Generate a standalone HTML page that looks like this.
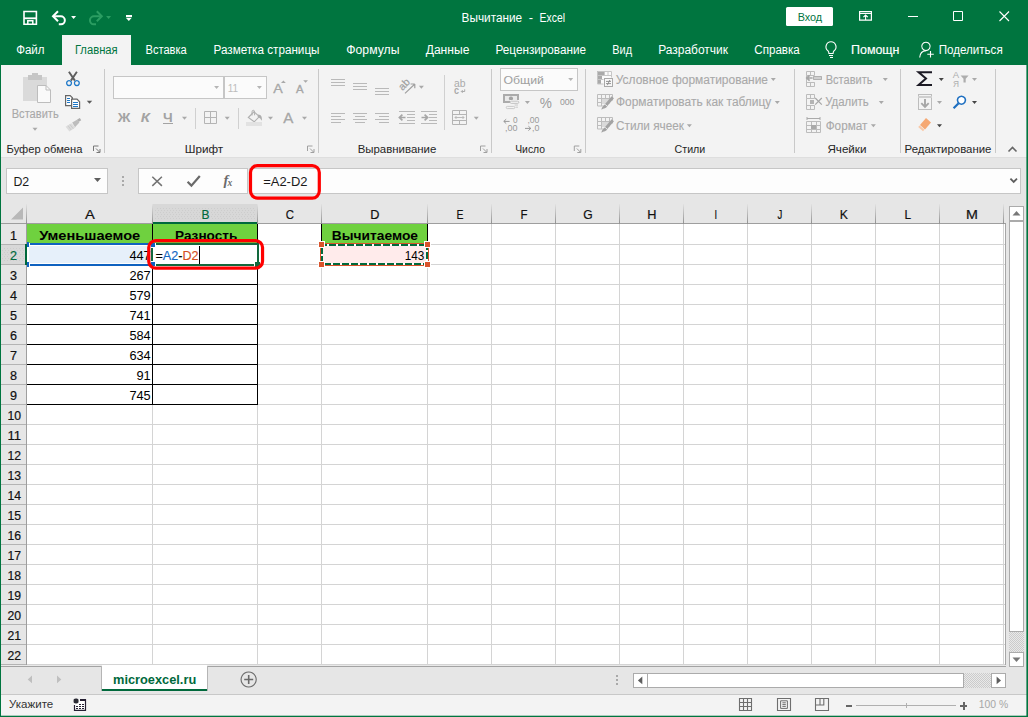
<!DOCTYPE html>
<html lang="ru"><head><meta charset="utf-8"><title>Вычитание - Excel</title>
<style>
html,body{margin:0;padding:0;background:#e6e6e6;overflow:hidden}
svg{display:block;font-family:"Liberation Sans",sans-serif}
svg rect{shape-rendering:crispEdges}
svg .aa{shape-rendering:geometricPrecision}
svg text{white-space:pre}
</style></head><body>
<svg width="1028" height="717" viewBox="0 0 1028 717">
<defs><pattern id="dh" width="3" height="4" patternUnits="userSpaceOnUse"><rect width="3" height="4" fill="#d8d8d8"/><rect x="1" y="0" width="1" height="1" fill="#cdcdcd"/><rect x="2" y="2" width="1" height="1" fill="#cdcdcd"/></pattern><pattern id="dz" width="2" height="2" patternUnits="userSpaceOnUse"><rect width="2" height="2" fill="#e9e9e9"/><rect width="1" height="1" fill="#cbcbcb"/><rect x="1" y="1" width="1" height="1" fill="#cbcbcb"/></pattern><linearGradient id="hg" x1="0" y1="0" x2="0" y2="1"><stop offset="0" stop-color="#e2e2e2"/><stop offset="1" stop-color="#8f8f8f"/></linearGradient></defs>
<rect x="0" y="0" width="1028" height="717" fill="#e6e6e6" />
<rect x="0" y="0" width="1028" height="65" fill="#00753f" />
<rect x="62" y="35" width="69" height="30" fill="#f3f3f3" />
<rect x="0" y="65" width="1028" height="92" fill="#f3f3f3" />
<rect x="0" y="157" width="1028" height="1" fill="#dedede"/>
<text x="461.5" y="21.8" font-size="12.5" fill="#fff" font-weight="normal" font-style="normal" textLength="60.7" lengthAdjust="spacingAndGlyphs" >Вычитание</text>
<text x="528.7" y="21.8" font-size="12.5" fill="#fff" font-weight="normal" font-style="normal" textLength="4.3" lengthAdjust="spacingAndGlyphs" >-</text>
<text x="539.6" y="21.8" font-size="12.5" fill="#fff" font-weight="normal" font-style="normal" textLength="25.4" lengthAdjust="spacingAndGlyphs" >Excel</text>
<path d="M24 11.5h12.4v12.7h-12.4z" fill="none" stroke="#fff" stroke-width="1.6" class="aa" />
<path d="M24 18.3h12.4" fill="none" stroke="#fff" stroke-width="1.8" class="aa" />
<path d="M27.8 24v-3.2h5v3.2" fill="none" stroke="#fff" stroke-width="1.5" class="aa" />
<path d="M53.5 16.3h7.2a4 4 0 0 1 0.3 8h-2.2" fill="none" stroke="#fff" stroke-width="2" class="aa" />
<path d="M58 11.3l-5 5l5 5" fill="none" stroke="#fff" stroke-width="2" class="aa" />
<path d="M71.1 16.1h5l-2.5 3z" fill="#fff" class="aa"/>
<path d="M101.3 16.3h-7.2a4 4 0 0 0 -0.3 8h2.2" fill="none" stroke="#2b9d62" stroke-width="2" class="aa" />
<path d="M96.8 11.3l5 5l-5 5" fill="none" stroke="#2b9d62" stroke-width="2" class="aa" />
<path d="M106.1 16.1h5l-2.5 3z" fill="#2b9d62" class="aa"/>
<rect x="126" y="15" width="6" height="1.5" fill="#fff"/>
<path d="M125.80000000000001 17.7h6l-3.0 3.2z" fill="#fff" class="aa"/>
<rect x="786" y="7" width="47" height="19" rx="1.5" fill="#fff" class="aa"/>
<text x="797.7" y="20.6" font-size="11.5" fill="#00753f" font-weight="normal" font-style="normal" textLength="24.5" lengthAdjust="spacingAndGlyphs" >Вход</text>
<path d="M859.6 11.6h11.8v8.6h-11.8z" fill="none" stroke="#fff" stroke-width="1.2" class="aa" />
<rect x="859" y="13" width="13" height="1" fill="#fff"/>
<path d="M865.6 20v-4.6M863.4 17.2l2.2-2.2l2.2 2.2" fill="none" stroke="#fff" stroke-width="1.1" class="aa" />
<rect x="908" y="16" width="10" height="1" fill="#fff"/>
<path d="M953.5 11.5h9v9h-9z" fill="none" stroke="#fff" stroke-width="1" class="aa" />
<path d="M999.5 11.5l9.5 9.5M1009 11.5l-9.5 9.5" fill="none" stroke="#fff" stroke-width="1.1" class="aa" />
<text x="16.2" y="53.8" font-size="12" fill="#fff" font-weight="normal" font-style="normal" textLength="28.3" lengthAdjust="spacingAndGlyphs" >Файл</text>
<text x="74.9" y="53.8" font-size="12" fill="#00753f" font-weight="normal" font-style="normal" textLength="42.8" lengthAdjust="spacingAndGlyphs" >Главная</text>
<text x="145.5" y="53.8" font-size="12" fill="#fff" font-weight="normal" font-style="normal" textLength="41.3" lengthAdjust="spacingAndGlyphs" >Вставка</text>
<text x="213.5" y="53.8" font-size="12" fill="#fff" font-weight="normal" font-style="normal" textLength="106.0" lengthAdjust="spacingAndGlyphs" >Разметка страницы</text>
<text x="346.3" y="53.8" font-size="12" fill="#fff" font-weight="normal" font-style="normal" textLength="53.1" lengthAdjust="spacingAndGlyphs" >Формулы</text>
<text x="425.7" y="53.8" font-size="12" fill="#fff" font-weight="normal" font-style="normal" textLength="43.7" lengthAdjust="spacingAndGlyphs" >Данные</text>
<text x="495.5" y="53.8" font-size="12" fill="#fff" font-weight="normal" font-style="normal" textLength="90.5" lengthAdjust="spacingAndGlyphs" >Рецензирование</text>
<text x="612.3" y="53.8" font-size="12" fill="#fff" font-weight="normal" font-style="normal" textLength="19.7" lengthAdjust="spacingAndGlyphs" >Вид</text>
<text x="658.2" y="53.8" font-size="12" fill="#fff" font-weight="normal" font-style="normal" textLength="69.8" lengthAdjust="spacingAndGlyphs" >Разработчик</text>
<text x="754.3" y="53.8" font-size="12" fill="#fff" font-weight="normal" font-style="normal" textLength="45.5" lengthAdjust="spacingAndGlyphs" >Справка</text>
<text x="851" y="53.8" font-size="12" fill="#fff" font-weight="normal" font-style="normal" textLength="48.5" lengthAdjust="spacingAndGlyphs" stroke="#fff" stroke-width="0.15">Помощн</text>
<text x="938.7" y="53.8" font-size="12" fill="#fff" font-weight="normal" font-style="normal" textLength="64.0" lengthAdjust="spacingAndGlyphs" >Поделиться</text>
<path d="M831 41.8a5 5 0 0 1 3 9c-0.8 0.7-0.9 1.6-0.9 2.7h-4.2c0-1.1-0.1-2-0.9-2.7a5 5 0 0 1 3-9z" fill="none" stroke="#fff" stroke-width="1.1" class="aa" />
<rect x="829" y="55" width="4.2000000000000455" height="1" fill="#fff"/>
<rect x="829.6" y="57" width="3.0" height="1" fill="#fff"/>
<path d="M926 42.2a4.2 4.2 0 1 1 -0.1 0z" fill="none" stroke="#fff" stroke-width="1.1" class="aa" />
<path d="M919.7 57.5c0.3-4 2.5-6.6 6.3-6.9" fill="none" stroke="#fff" stroke-width="1.1" class="aa" />
<path d="M930.5 51v6.5M927.3 54.2h6.5" fill="none" stroke="#fff" stroke-width="1.1" class="aa" />
<rect x="104" y="69" width="1" height="84" fill="#c9c9c9"/>
<rect x="318" y="69" width="1" height="84" fill="#c9c9c9"/>
<rect x="491" y="69" width="1" height="84" fill="#c9c9c9"/>
<rect x="585" y="69" width="1" height="84" fill="#c9c9c9"/>
<rect x="794" y="69" width="1" height="84" fill="#c9c9c9"/>
<rect x="900" y="69" width="1" height="84" fill="#c9c9c9"/>
<rect x="995" y="69" width="1" height="84" fill="#c9c9c9"/>
<rect x="195" y="108" width="1" height="21" fill="#d0d0d0"/>
<rect x="238" y="108" width="1" height="21" fill="#d0d0d0"/>
<rect x="444" y="75" width="1" height="55" fill="#d0d0d0"/>
<text x="6.6" y="152.8" font-size="11.5" fill="#262626" font-weight="normal" font-style="normal" textLength="75.8" lengthAdjust="spacingAndGlyphs" >Буфер обмена</text>
<path d="M93.5 151v-5h5" fill="none" stroke="#777" stroke-width="1" class="aa" />
<path d="M96.0 148.5l3.5 3.5M100.0 149v3.5h-3.5" fill="none" stroke="#777" stroke-width="1" class="aa" />
<text x="11.7" y="117.8" font-size="12" fill="#a9a9a9" font-weight="normal" font-style="normal" textLength="47.0" lengthAdjust="spacingAndGlyphs" stroke="#a9a9a9" stroke-width="0.1">Вставить</text>
<path d="M32.5 127.80000000000001h5l-2.5 3z" fill="#a9a9a9" class="aa"/>
<rect x="23" y="77" width="24" height="24" fill="#dadada" />
<rect x="28" y="75" width="14" height="5" fill="#c6c6c6" />
<rect x="32" y="73" width="6" height="3" fill="#c6c6c6" />
<path d="M37.5 85.5h8.5l4.5 4.5v12.5h-13z" fill="#fafafa" stroke="#bdbdbd" stroke-width="1" class="aa" />
<path d="M46 85.5v4.5h4.5" fill="none" stroke="#bdbdbd" stroke-width="1" class="aa" />
<path d="M68.9 71.8l6 8.8M76.9 71.8l-6 8.8" fill="none" stroke="#5e5e5e" stroke-width="1.9" class="aa" />
<path d="M69.1 80.7a2.4 2.4 0 1 1 -0.1 0zM76.9 80.7a2.4 2.4 0 1 1 -0.1 0z" fill="#f3f3f3" stroke="#1e78c8" stroke-width="1.3" class="aa" />
<path d="M65.6 95.6h4.6l2.2 2.2v7.8h-6.8z" fill="#fff" stroke="#666" stroke-width="1.2" class="aa" />
<path d="M71.6 99.2h5.4l2.6 2.6v6.6h-8z" fill="#fff" stroke="#666" stroke-width="1.2" class="aa" />
<rect x="67" y="98" width="3" height="1" fill="#1e78c8"/>
<rect x="67" y="100" width="3" height="1" fill="#1e78c8"/>
<rect x="67" y="102" width="3" height="1" fill="#1e78c8"/>
<rect x="73" y="102" width="5" height="1" fill="#1e78c8"/>
<rect x="73" y="104" width="5" height="1" fill="#1e78c8"/>
<rect x="73" y="106" width="5" height="1" fill="#1e78c8"/>
<path d="M86.8 100.8h5.4l-2.7 3z" fill="#5a5a5a" class="aa"/>
<path d="M77.2 119.6l2.6-1.6l1.4 2.2l-2.6 1.7z" fill="#b0b0b0" stroke="none" stroke-width="1" class="aa" />
<path d="M72.2 122.6l5.2-3.2l2 3.2l-4.4 4.6z" fill="#bdbdbd" stroke="none" stroke-width="1" class="aa" />
<path d="M71.4 123.2l4 4.4l-6 3.8l-3.8-4.6z" fill="#dcdcdc" stroke="none" stroke-width="1" class="aa" />
<path d="M69.8 124.4l3.6 4.4M68 125.6l3.2 4.4" fill="none" stroke="#c6c6c6" stroke-width="0.8" class="aa" />
<text x="184.8" y="152.8" font-size="11.5" fill="#262626" font-weight="normal" font-style="normal" textLength="38.4" lengthAdjust="spacingAndGlyphs" >Шрифт</text>
<path d="M307.5 151v-5h5" fill="none" stroke="#a0a0a0" stroke-width="1" class="aa" />
<path d="M310.0 148.5l3.5 3.5M314.0 149v3.5h-3.5" fill="none" stroke="#a0a0a0" stroke-width="1" class="aa" />
<rect x="113.5" y="76.5" width="110" height="22" fill="#fbfbfb" stroke="#c6c6c6" stroke-width="1" />
<rect x="224.5" y="76.5" width="42" height="22" fill="#fbfbfb" stroke="#c6c6c6" stroke-width="1" />
<path d="M214.1 86.0h5l-2.5 3z" fill="#b5b5b5" class="aa"/>
<path d="M256.9 86.0h5l-2.5 3z" fill="#b5b5b5" class="aa"/>
<text x="227.8" y="91.6" font-size="11.5" fill="#bdbdbd" font-weight="normal" font-style="normal" textLength="10.4" lengthAdjust="spacingAndGlyphs" >11</text>
<text x="273.3" y="92.8" font-size="13" fill="#a6a6a6" font-weight="normal" font-style="normal" textLength="9.5" lengthAdjust="spacingAndGlyphs" stroke="#a6a6a6" stroke-width="0.3">A</text>
<path d="M281 83l2.4-2.6l2.4 2.6z" fill="#a9a9a9" stroke="none" stroke-width="1" class="aa" />
<text x="296.1" y="92.8" font-size="10.5" fill="#a6a6a6" font-weight="normal" font-style="normal" textLength="7.6" lengthAdjust="spacingAndGlyphs" stroke="#a6a6a6" stroke-width="0.3">A</text>
<path d="M303.2 80.2h4.8l-2.4 2.6z" fill="#a9a9a9" stroke="none" stroke-width="1" class="aa" />
<text x="117.7" y="121.8" font-size="12.5" fill="#a3a3a3" font-weight="bold" font-style="normal" textLength="12.7" lengthAdjust="spacingAndGlyphs" >Ж</text>
<text x="140.8" y="121.8" font-size="12.5" fill="#a3a3a3" font-weight="bold" font-style="italic" textLength="9.2" lengthAdjust="spacingAndGlyphs" >К</text>
<text x="163.1" y="121.8" font-size="12.5" fill="#a3a3a3" font-weight="bold" font-style="normal" textLength="9.7" lengthAdjust="spacingAndGlyphs" >Ч</text>
<rect x="163" y="123" width="10" height="1" fill="#a3a3a3"/>
<path d="M182.0 116.8h5l-2.5 3z" fill="#a9a9a9" class="aa"/>
<path d="M204.5 111.5h12v12h-12zM210.5 111.5v12M204.5 117.5h12" fill="none" stroke="#b4b4b4" stroke-width="1" class="aa" />
<path d="M224.7 116.8h5l-2.5 3z" fill="#a9a9a9" class="aa"/>
<path d="M254 111.8l5.4 4.8l-5.2 5.2l-5.9-4.3z" fill="none" stroke="#b0b0b0" stroke-width="1.1" class="aa" />
<path d="M252 115.5v-3.6a1.3 1.6 0 0 1 2.6 0v3.4" fill="none" stroke="#b0b0b0" stroke-width="1" class="aa" />
<path d="M258.2 114.5c3 0.2 4.2 2.6 3.6 6.3c-0.9-1.9-1.9-2.9-4.2-3.9z" fill="#adadad" stroke="none" stroke-width="1" class="aa" />
<rect x="246" y="122" width="16" height="4" fill="#e2e2e2" />
<path d="M268.0 116.8h5l-2.5 3z" fill="#a9a9a9" class="aa"/>
<text x="283.2" y="122.8" font-size="15" fill="#a6a6a6" font-weight="normal" font-style="normal" textLength="10.1" lengthAdjust="spacingAndGlyphs" stroke="#a6a6a6" stroke-width="0.3">A</text>
<path d="M302.0 116.8h5l-2.5 3z" fill="#a9a9a9" class="aa"/>
<text x="357.7" y="152.8" font-size="11.5" fill="#262626" font-weight="normal" font-style="normal" textLength="78.6" lengthAdjust="spacingAndGlyphs" >Выравнивание</text>
<path d="M480.5 151v-5h5" fill="none" stroke="#a0a0a0" stroke-width="1" class="aa" />
<path d="M483.0 148.5l3.5 3.5M487.0 149v3.5h-3.5" fill="none" stroke="#a0a0a0" stroke-width="1" class="aa" />
<rect x="331" y="79" width="14" height="1" fill="#b9b9b9"/>
<rect x="331" y="82" width="14" height="1" fill="#b9b9b9"/>
<rect x="331" y="85" width="14" height="1" fill="#b9b9b9"/>
<rect x="353" y="83" width="14" height="1" fill="#b9b9b9"/>
<rect x="353" y="86" width="14" height="1" fill="#b9b9b9"/>
<rect x="353" y="89" width="14" height="1" fill="#b9b9b9"/>
<rect x="375" y="88" width="14" height="1" fill="#b9b9b9"/>
<rect x="375" y="91" width="14" height="1" fill="#b9b9b9"/>
<rect x="375" y="94" width="14" height="1" fill="#b9b9b9"/>
<text x="402.4" y="90.9" font-size="10.5" fill="#a0a0a0" stroke="#a0a0a0" stroke-width="0.2" transform="rotate(-45 402.4 90.9)">ab</text>
<path d="M405 93.4l9.6-9.2M414.8 84h-4.2M414.8 84v4.2" fill="none" stroke="#a0a0a0" stroke-width="1.2" class="aa" />
<path d="M418.9 85.8h5l-2.5 3z" fill="#a9a9a9" class="aa"/>
<rect x="331" y="113" width="14" height="1" fill="#b9b9b9"/>
<rect x="353" y="113" width="14" height="1" fill="#b9b9b9"/>
<rect x="375" y="113" width="14" height="1" fill="#b9b9b9"/>
<rect x="331" y="116" width="10" height="1" fill="#b9b9b9"/>
<rect x="355" y="116" width="10" height="1" fill="#b9b9b9"/>
<rect x="379" y="116" width="10" height="1" fill="#b9b9b9"/>
<rect x="331" y="119" width="14" height="1" fill="#b9b9b9"/>
<rect x="353" y="119" width="14" height="1" fill="#b9b9b9"/>
<rect x="375" y="119" width="14" height="1" fill="#b9b9b9"/>
<rect x="331" y="122" width="10" height="1" fill="#b9b9b9"/>
<rect x="355" y="122" width="10" height="1" fill="#b9b9b9"/>
<rect x="379" y="122" width="10" height="1" fill="#b9b9b9"/>
<rect x="399" y="111" width="16" height="1" fill="#b9b9b9"/>
<rect x="399" y="123" width="16" height="1" fill="#b9b9b9"/>
<rect x="407" y="114" width="8" height="1" fill="#b9b9b9"/>
<rect x="407" y="117" width="8" height="1" fill="#b9b9b9"/>
<rect x="407" y="120" width="8" height="1" fill="#b9b9b9"/>
<path d="M405.5 117.5h-5.5M402.4 114.6l-3 2.9l3 2.9" fill="none" stroke="#a6a6a6" stroke-width="1.7" class="aa" />
<rect x="421" y="111" width="16" height="1" fill="#b9b9b9"/>
<rect x="421" y="123" width="16" height="1" fill="#b9b9b9"/>
<rect x="429" y="114" width="8" height="1" fill="#b9b9b9"/>
<rect x="429" y="117" width="8" height="1" fill="#b9b9b9"/>
<rect x="429" y="120" width="8" height="1" fill="#b9b9b9"/>
<path d="M421.5 117.5h5.5M424.6 114.6l3 2.9l-3 2.9" fill="none" stroke="#a6a6a6" stroke-width="1.7" class="aa" />
<text x="454" y="86.5" font-size="10" fill="#aaa" font-weight="normal" font-style="normal" textLength="11.5" lengthAdjust="spacingAndGlyphs" >ab</text>
<text x="454" y="93.8" font-size="10" fill="#aaa" font-weight="bold" font-style="normal" textLength="5" lengthAdjust="spacingAndGlyphs" >c</text>
<path d="M464.7 89.3v2.2h-3.2M462.7 90.1l-1.4 1.4l1.4 1.4" fill="none" stroke="#a3a3a3" stroke-width="0.9" class="aa" />
<path d="M452.5 110.5h14v14h-14z M452.5 114.5h14 M452.5 120.5h14 M459.5 110.5v4 M459.5 120.5v4" fill="none" stroke="#b4b4b4" stroke-width="1" class="aa" />
<path d="M455 117.5h9M456.5 116l-1.5 1.5l1.5 1.5M462.5 116l1.5 1.5l-1.5 1.5" fill="none" stroke="#b4b4b4" stroke-width="0.9" class="aa" />
<path d="M473.8 116.8h5l-2.5 3z" fill="#a9a9a9" class="aa"/>
<text x="515.2" y="152.8" font-size="11.5" fill="#262626" font-weight="normal" font-style="normal" textLength="29.8" lengthAdjust="spacingAndGlyphs" >Число</text>
<path d="M574.3 151v-5h5" fill="none" stroke="#a0a0a0" stroke-width="1" class="aa" />
<path d="M576.8 148.5l3.5 3.5M580.8 149v3.5h-3.5" fill="none" stroke="#a0a0a0" stroke-width="1" class="aa" />
<rect x="500.5" y="68.5" width="77" height="22" fill="#fbfbfb" stroke="#c6c6c6" stroke-width="1" />
<text x="503.4" y="83.6" font-size="11.5" fill="#a0a0a0" font-weight="normal" font-style="normal" textLength="40.5" lengthAdjust="spacingAndGlyphs" >Общий</text>
<path d="M568.2 78.0h5l-2.5 3z" fill="#b5b5b5" class="aa"/>
<rect x="503.8" y="94.8" width="14.4" height="7.4" fill="#e9e9e9" stroke="#ababab" stroke-width="1.6" />
<path d="M511 96.4a2.1 2.1 0 1 1 -0.1 0z" fill="#a3a3a3" stroke="none" stroke-width="1" class="aa" />
<rect x="510" y="100" width="9.5" height="5" fill="#f3f3f3" />
<path d="M511.3 101.2h6.4a1.1 1.1 0 0 1 0 2.2h-6.4a1.1 1.1 0 0 1 0-2.2z" fill="#f3f3f3" stroke="#bdbdbd" stroke-width="0.9" class="aa" />
<path d="M507.3 106.4h6.4a1.1 1.1 0 0 1 0 2.2h-6.4a1.1 1.1 0 0 1 0-2.2z" fill="none" stroke="#c4c4c4" stroke-width="0.9" class="aa" />
<path d="M514.6 105h3.4M515.6 107.2h2.4" fill="none" stroke="#c4c4c4" stroke-width="0.9" class="aa" />
<path d="M524.9 101.0h5l-2.5 3z" fill="#a9a9a9" class="aa"/>
<text x="539.7" y="107.5" font-size="14" fill="#9b9b9b" font-weight="normal" font-style="normal" textLength="12.1" lengthAdjust="spacingAndGlyphs" >%</text>
<text x="559.9" y="104.8" font-size="9.5" fill="#959595" font-weight="normal" font-style="normal" textLength="14.5" lengthAdjust="spacingAndGlyphs" >000</text>
<text x="512.9" y="123.4" font-size="8.2" fill="#999" font-weight="normal" font-style="normal" textLength="4.6" lengthAdjust="spacingAndGlyphs" >0</text>
<text x="505" y="131" font-size="8.2" fill="#999" font-weight="normal" font-style="normal" textLength="12.5" lengthAdjust="spacingAndGlyphs" >,00</text>
<path d="M509.6 121.4h-5.8M506.2 119.2l-2.4 2.2l2.4 2.2" fill="none" stroke="#999" stroke-width="1" class="aa" />
<text x="527.4" y="123.4" font-size="8.2" fill="#999" font-weight="normal" font-style="normal" textLength="12.0" lengthAdjust="spacingAndGlyphs" >,00</text>
<text x="532" y="131" font-size="8.2" fill="#999" font-weight="normal" font-style="normal" textLength="7.4" lengthAdjust="spacingAndGlyphs" >,0</text>
<path d="M525 128.4h5.8M528.4 126.2l2.4 2.2l-2.4 2.2" fill="none" stroke="#999" stroke-width="1" class="aa" />
<text x="674.6" y="152.8" font-size="11.5" fill="#262626" font-weight="normal" font-style="normal" textLength="30.7" lengthAdjust="spacingAndGlyphs" >Стили</text>
<text x="615.8" y="83.8" font-size="12" fill="#a9a9a9" font-weight="normal" font-style="normal" textLength="152.2" lengthAdjust="spacingAndGlyphs" stroke="#a9a9a9" stroke-width="0.1">Условное форматирование</text>
<path d="M770.8 78.0h5l-2.5 3z" fill="#a9a9a9" class="aa"/>
<text x="616" y="106.4" font-size="12" fill="#a9a9a9" font-weight="normal" font-style="normal" textLength="155.3" lengthAdjust="spacingAndGlyphs" stroke="#a9a9a9" stroke-width="0.1">Форматировать как таблицу</text>
<path d="M774.8 101.0h5l-2.5 3z" fill="#a9a9a9" class="aa"/>
<text x="616" y="129.8" font-size="12" fill="#a9a9a9" font-weight="normal" font-style="normal" textLength="67.9" lengthAdjust="spacingAndGlyphs" stroke="#a9a9a9" stroke-width="0.1">Стили ячеек</text>
<path d="M686.9 124.3h5l-2.5 3z" fill="#a9a9a9" class="aa"/>
<rect x="597" y="71" width="15" height="13" fill="#fafafa" />
<rect x="597" y="71" width="7" height="4" fill="#a9a9a9" />
<rect x="597" y="75.5" width="5" height="4" fill="#a9a9a9" />
<rect x="597" y="80" width="3.5" height="4" fill="#a9a9a9" />
<path d="M597.5 71.5h14v6M597.5 71.5v12.5h6 M597.5 75.5h14 M597.5 79.5h6 M604.5 71.5v4 M608 71.5v4" fill="none" stroke="#c6c6c6" stroke-width="1" class="aa" />
<rect x="604.2" y="78.6" width="8.4" height="8.200000000000001" fill="#f8f8f8" stroke="#a9a9a9" stroke-width="1.2" />
<path d="M606 81.4h5M606 83.6h5M609.9 80l-2.6 5.2" fill="none" stroke="#8a8a8a" stroke-width="0.9" class="aa" />
<path d="M597.5 94.5h15v6 M597.5 94.5v11.5h7 M597.5 98.5h15 M597.5 102.5h10 M601.5 94.5v11.5 M605.5 94.5v9 M609.5 94.5v6" fill="none" stroke="#bdbdbd" stroke-width="1" class="aa" />
<rect x="602" y="99" width="8" height="5" fill="#dadada" />
<path d="M612.8 97.2l-6.4 7.6" fill="none" stroke="#a3a3a3" stroke-width="3" class="aa" />
<path d="M607.6 103.6c0.6 2.2-0.8 4-2.6 4.6c-1.4 0.5-2.4 0.6-3.6 1.6c0.4-2.6 1.6-3.6 2.8-4.8c0.9-0.9 2-1.6 3.4-1.4z" fill="#a3a3a3" stroke="none" stroke-width="1" class="aa" />
<path d="M605.2 104.4l2.2 2" fill="none" stroke="#f3f3f3" stroke-width="0.9" class="aa" />
<path d="M597.5 117.5h15v6 M597.5 117.5v11.5h7 M597.5 121.5h15 M597.5 125.5h10 M601.5 117.5v11.5 M605.5 117.5v9 M609.5 117.5v6" fill="none" stroke="#bdbdbd" stroke-width="1" class="aa" />
<rect x="602" y="122" width="8" height="5" fill="#dadada" />
<path d="M612.8 120.2l-6.4 7.6" fill="none" stroke="#a3a3a3" stroke-width="3" class="aa" />
<path d="M607.6 126.6c0.6 2.2-0.8 4-2.6 4.6c-1.4 0.5-2.4 0.6-3.6 1.6c0.4-2.6 1.6-3.6 2.8-4.8c0.9-0.9 2-1.6 3.4-1.4z" fill="#a3a3a3" stroke="none" stroke-width="1" class="aa" />
<path d="M605.2 127.4l2.2 2" fill="none" stroke="#f3f3f3" stroke-width="0.9" class="aa" />
<text x="827.4" y="152.8" font-size="11.5" fill="#262626" font-weight="normal" font-style="normal" textLength="39.1" lengthAdjust="spacingAndGlyphs" >Ячейки</text>
<text x="825.7" y="83.8" font-size="12" fill="#a9a9a9" font-weight="normal" font-style="normal" textLength="46.8" lengthAdjust="spacingAndGlyphs" stroke="#a9a9a9" stroke-width="0.1">Вставить</text>
<path d="M882.8 78.0h5l-2.5 3z" fill="#a9a9a9" class="aa"/>
<text x="825.2" y="106.4" font-size="12" fill="#a9a9a9" font-weight="normal" font-style="normal" textLength="43.6" lengthAdjust="spacingAndGlyphs" stroke="#a9a9a9" stroke-width="0.1">Удалить</text>
<path d="M878.8 101.0h5l-2.5 3z" fill="#a9a9a9" class="aa"/>
<text x="825.7" y="129.8" font-size="12" fill="#a9a9a9" font-weight="normal" font-style="normal" textLength="41.7" lengthAdjust="spacingAndGlyphs" stroke="#a9a9a9" stroke-width="0.1">Формат</text>
<path d="M870.9 124.3h5l-2.5 3z" fill="#a9a9a9" class="aa"/>
<path d="M806.5 71.5h8v4h-8zM806.5 75.5v11h8v-4h-8M810.5 71.5v4M810.5 82.5v4M806.5 82.5h8" fill="none" stroke="#bcbcbc" stroke-width="1" class="aa" />
<rect x="813" y="76" width="9" height="4" fill="#cfcfcf" />
<path d="M813.5 76.5h8v3h-8z" fill="none" stroke="#b0b0b0" stroke-width="1" class="aa" />
<path d="M812.6 78h-5.6M809.6 75.4l-2.8 2.6l2.8 2.6" fill="none" stroke="#a6a6a6" stroke-width="1.7" class="aa" />
<path d="M806.5 94.5h8v4h-8zM806.5 98.5v11h8v-4h-8M810.5 94.5v4M810.5 105.5v4M806.5 105.5h8" fill="none" stroke="#bcbcbc" stroke-width="1" class="aa" />
<rect x="809.5" y="99.5" width="4" height="4" fill="#b4b4b4" />
<path d="M815.2 98l6.6 6.6M821.8 98l-6.6 6.6" fill="none" stroke="#a6a6a6" stroke-width="1.2" class="aa" />
<path d="M807 118.5h13M807 117v3M820 117v3" fill="none" stroke="#aaa" stroke-width="1" class="aa" />
<path d="M806.5 121.5h14v11h-14zM806.5 125.5h14M806.5 129.5h14M811.5 121.5v11M816.5 121.5v11" fill="none" stroke="#bcbcbc" stroke-width="1" class="aa" />
<rect x="811" y="125" width="5" height="4" fill="#aaa" />
<text x="904.6" y="152.8" font-size="11.5" fill="#262626" font-weight="normal" font-style="normal" textLength="86.8" lengthAdjust="spacingAndGlyphs" >Редактирование</text>
<path d="M932 72.3h-13.4l7.4 6.3l-7.4 6.3h13.4" fill="none" stroke="#1c1a24" stroke-width="2" class="aa" />
<path d="M938.8 78.0h5l-2.5 3z" fill="#444" class="aa"/>
<text x="952.8" y="77.8" font-size="9" fill="#adadad" font-weight="normal" font-style="normal" textLength="6.4" lengthAdjust="spacingAndGlyphs" >А</text>
<text x="953" y="87" font-size="9" fill="#adadad" font-weight="normal" font-style="normal" textLength="6" lengthAdjust="spacingAndGlyphs" >Я</text>
<path d="M960.6 75.6h8l-2.9 3.2v3.8h-2.2v-3.8z" fill="#adadad" stroke="none" stroke-width="1" class="aa" />
<path d="M972.0 78.0h5l-2.5 3z" fill="#a9a9a9" class="aa"/>
<rect x="918.5" y="94.5" width="13" height="15" fill="#f3f3f3" stroke="#bdbdbd" stroke-width="1" />
<rect x="918" y="96" width="14" height="2" fill="#cfcfcf"/>
<path d="M925 99v7.6M921.3 103.2l3.7 3.7l3.7-3.7" fill="none" stroke="#a6a6a6" stroke-width="1.9" class="aa" />
<path d="M937.0 101.0h5l-2.5 3z" fill="#a9a9a9" class="aa"/>
<path d="M961.5 96.2a4 4 0 1 1 -0.1 0z" fill="#fff" stroke="#1e6fc0" stroke-width="1.6" class="aa" />
<path d="M958.6 103.3l-5 5" fill="none" stroke="#1e6fc0" stroke-width="2.2" class="aa" />
<path d="M972.0 101.0h5l-2.5 3z" fill="#444" class="aa"/>
<path d="M926 118l5 4.5l-6 7l-5-4.5z" fill="#f5a873" stroke="none" stroke-width="1" class="aa" />
<path d="M919.6 125.4l4.8 4.4l-1.4 1.5l-4.8-4.4z" fill="#f9c9a8" stroke="none" stroke-width="1" class="aa" />
<path d="M937.0 124.3h5l-2.5 3z" fill="#444" class="aa"/>
<path d="M1008.5 151.5l4-4l4 4" fill="none" stroke="#666" stroke-width="1.6" class="aa" />
<rect x="6.5" y="168.5" width="101" height="25" fill="#fdfdfd" stroke="#c6c6c6" stroke-width="1" />
<text x="13.4" y="186" font-size="12.5" fill="#1a1a1a" font-weight="normal" font-style="normal" textLength="15.8" lengthAdjust="spacingAndGlyphs" >D2</text>
<path d="M94.0 178.0h7l-3.5 4z" fill="#5e5e5e" class="aa"/>
<rect x="122" y="176" width="2" height="2" fill="#a9a9a9" />
<rect x="122" y="180" width="2" height="2" fill="#a9a9a9" />
<rect x="122" y="184" width="2" height="2" fill="#a9a9a9" />
<rect x="138.5" y="168.5" width="109" height="25" fill="#fdfdfd" stroke="#c6c6c6" stroke-width="1" />
<path d="M152.3 176.7l9.6 9.2M161.9 176.7l-9.6 9.2" fill="none" stroke="#737373" stroke-width="1.5" class="aa" />
<path d="M187.6 181.8l3.8 3.8l8.4-9.6" fill="none" stroke="#6a6a6a" stroke-width="2.2" class="aa" />
<text x="223.5" y="185.3" font-family="Liberation Serif,serif" font-style="italic" font-weight="bold" fill="#6a6a6a"><tspan font-size="14.5">f</tspan><tspan font-size="9.5" dx="-0.8" dy="0.2">x</tspan></text>
<rect x="249.5" y="168.5" width="771" height="25" fill="#fdfdfd" stroke="#c6c6c6" stroke-width="1" />
<text x="263.2" y="186" font-size="12.5" fill="#1a1a1a" font-weight="normal" font-style="normal" textLength="44.3" lengthAdjust="spacingAndGlyphs" >=A2-D2</text>
<path d="M1010.4 178.6l3.3 3.3l3.3-3.3" fill="none" stroke="#5e5e5e" stroke-width="1.8" class="aa" />
<rect x="250.5" y="165.6" width="68.8" height="32.5" rx="7" fill="none" stroke="#ff0000" stroke-width="3.2" class="aa"/>
<rect x="27" y="224" width="979" height="441" fill="#fff" />
<rect x="153" y="204" width="104" height="18" fill="#d8d8d8" />
<rect x="155" y="207" width="100" height="13" fill="url(#dh)" />
<rect x="27" y="244" width="978" height="1" fill="#d4d4d4"/>
<rect x="27" y="264" width="978" height="1" fill="#d4d4d4"/>
<rect x="27" y="284" width="978" height="1" fill="#d4d4d4"/>
<rect x="27" y="304" width="978" height="1" fill="#d4d4d4"/>
<rect x="27" y="324" width="978" height="1" fill="#d4d4d4"/>
<rect x="27" y="344" width="978" height="1" fill="#d4d4d4"/>
<rect x="27" y="364" width="978" height="1" fill="#d4d4d4"/>
<rect x="27" y="384" width="978" height="1" fill="#d4d4d4"/>
<rect x="27" y="404" width="978" height="1" fill="#d4d4d4"/>
<rect x="27" y="424" width="978" height="1" fill="#d4d4d4"/>
<rect x="27" y="444" width="978" height="1" fill="#d4d4d4"/>
<rect x="27" y="464" width="978" height="1" fill="#d4d4d4"/>
<rect x="27" y="484" width="978" height="1" fill="#d4d4d4"/>
<rect x="27" y="504" width="978" height="1" fill="#d4d4d4"/>
<rect x="27" y="524" width="978" height="1" fill="#d4d4d4"/>
<rect x="27" y="544" width="978" height="1" fill="#d4d4d4"/>
<rect x="27" y="564" width="978" height="1" fill="#d4d4d4"/>
<rect x="27" y="584" width="978" height="1" fill="#d4d4d4"/>
<rect x="27" y="604" width="978" height="1" fill="#d4d4d4"/>
<rect x="27" y="624" width="978" height="1" fill="#d4d4d4"/>
<rect x="27" y="644" width="978" height="1" fill="#d4d4d4"/>
<rect x="27" y="664" width="978" height="1" fill="#d4d4d4"/>
<rect x="152" y="224" width="1" height="441" fill="#d4d4d4"/>
<rect x="257" y="224" width="1" height="441" fill="#d4d4d4"/>
<rect x="321" y="224" width="1" height="441" fill="#d4d4d4"/>
<rect x="427" y="224" width="1" height="441" fill="#d4d4d4"/>
<rect x="491" y="224" width="1" height="441" fill="#d4d4d4"/>
<rect x="555" y="224" width="1" height="441" fill="#d4d4d4"/>
<rect x="619" y="224" width="1" height="441" fill="#d4d4d4"/>
<rect x="683" y="224" width="1" height="441" fill="#d4d4d4"/>
<rect x="747" y="224" width="1" height="441" fill="#d4d4d4"/>
<rect x="811" y="224" width="1" height="441" fill="#d4d4d4"/>
<rect x="875" y="224" width="1" height="441" fill="#d4d4d4"/>
<rect x="939" y="224" width="1" height="441" fill="#d4d4d4"/>
<rect x="1003" y="224" width="1" height="441" fill="#d4d4d4"/>
<rect x="1005" y="224" width="1" height="442" fill="#a6a6a6"/>
<rect x="1" y="223" width="1005" height="1" fill="#9e9e9e"/>
<rect x="26" y="204" width="1" height="20" fill="url(#hg)"/>
<rect x="152" y="204" width="1" height="20" fill="url(#hg)"/>
<rect x="257" y="204" width="1" height="20" fill="url(#hg)"/>
<rect x="321" y="204" width="1" height="20" fill="url(#hg)"/>
<rect x="427" y="204" width="1" height="20" fill="url(#hg)"/>
<rect x="491" y="204" width="1" height="20" fill="url(#hg)"/>
<rect x="555" y="204" width="1" height="20" fill="url(#hg)"/>
<rect x="619" y="204" width="1" height="20" fill="url(#hg)"/>
<rect x="683" y="204" width="1" height="20" fill="url(#hg)"/>
<rect x="747" y="204" width="1" height="20" fill="url(#hg)"/>
<rect x="811" y="204" width="1" height="20" fill="url(#hg)"/>
<rect x="875" y="204" width="1" height="20" fill="url(#hg)"/>
<rect x="939" y="204" width="1" height="20" fill="url(#hg)"/>
<rect x="1003" y="204" width="1" height="20" fill="url(#hg)"/>
<rect x="26" y="224" width="1" height="441" fill="#9e9e9e"/>
<rect x="1" y="244" width="25" height="1" fill="#b3b3b3"/>
<rect x="1" y="264" width="25" height="1" fill="#b3b3b3"/>
<rect x="1" y="284" width="25" height="1" fill="#b3b3b3"/>
<rect x="1" y="304" width="25" height="1" fill="#b3b3b3"/>
<rect x="1" y="324" width="25" height="1" fill="#b3b3b3"/>
<rect x="1" y="344" width="25" height="1" fill="#b3b3b3"/>
<rect x="1" y="364" width="25" height="1" fill="#b3b3b3"/>
<rect x="1" y="384" width="25" height="1" fill="#b3b3b3"/>
<rect x="1" y="404" width="25" height="1" fill="#b3b3b3"/>
<rect x="1" y="424" width="25" height="1" fill="#b3b3b3"/>
<rect x="1" y="444" width="25" height="1" fill="#b3b3b3"/>
<rect x="1" y="464" width="25" height="1" fill="#b3b3b3"/>
<rect x="1" y="484" width="25" height="1" fill="#b3b3b3"/>
<rect x="1" y="504" width="25" height="1" fill="#b3b3b3"/>
<rect x="1" y="524" width="25" height="1" fill="#b3b3b3"/>
<rect x="1" y="544" width="25" height="1" fill="#b3b3b3"/>
<rect x="1" y="564" width="25" height="1" fill="#b3b3b3"/>
<rect x="1" y="584" width="25" height="1" fill="#b3b3b3"/>
<rect x="1" y="604" width="25" height="1" fill="#b3b3b3"/>
<rect x="1" y="624" width="25" height="1" fill="#b3b3b3"/>
<rect x="1" y="644" width="25" height="1" fill="#b3b3b3"/>
<rect x="1" y="664" width="25" height="1" fill="#b3b3b3"/>
<rect x="1" y="245" width="25" height="19" fill="#d8d8d8" />
<rect x="2" y="247" width="22" height="15" fill="url(#dh)" />
<rect x="25" y="245" width="2" height="19" fill="#00693c"/>
<rect x="153" y="222" width="104" height="2" fill="#00693c"/>
<path d="M23 207.5v12h-12z" fill="#b8b8b8" stroke="none" stroke-width="1" class="aa" />
<text x="85.0" y="218.7" font-size="12.5" fill="#111" font-weight="normal" font-style="normal" textLength="9.8" lengthAdjust="spacingAndGlyphs" stroke="#111" stroke-width="0.2">A</text>
<text x="201.4" y="218.7" font-size="12.5" fill="#00693c" font-weight="normal" font-style="normal" textLength="8.0" lengthAdjust="spacingAndGlyphs" stroke="#00693c" stroke-width="0.2">B</text>
<text x="285.79999999999995" y="218.7" font-size="12.5" fill="#111" font-weight="normal" font-style="normal" textLength="8.2" lengthAdjust="spacingAndGlyphs" stroke="#111" stroke-width="0.2">C</text>
<text x="370.29999999999995" y="218.7" font-size="12.5" fill="#111" font-weight="normal" font-style="normal" textLength="9.2" lengthAdjust="spacingAndGlyphs" stroke="#111" stroke-width="0.2">D</text>
<text x="456.4" y="218.7" font-size="12.5" fill="#111" font-weight="normal" font-style="normal" textLength="7.0" lengthAdjust="spacingAndGlyphs" stroke="#111" stroke-width="0.2">E</text>
<text x="520.4" y="218.7" font-size="12.5" fill="#111" font-weight="normal" font-style="normal" textLength="7.0" lengthAdjust="spacingAndGlyphs" stroke="#111" stroke-width="0.2">F</text>
<text x="583.1999999999999" y="218.7" font-size="12.5" fill="#111" font-weight="normal" font-style="normal" textLength="9.4" lengthAdjust="spacingAndGlyphs" stroke="#111" stroke-width="0.2">G</text>
<text x="647.3" y="218.7" font-size="12.5" fill="#111" font-weight="normal" font-style="normal" textLength="9.2" lengthAdjust="spacingAndGlyphs" stroke="#111" stroke-width="0.2">H</text>
<text x="714.6" y="218.7" font-size="12.5" fill="#111" font-weight="normal" font-style="normal" textLength="2.6" lengthAdjust="spacingAndGlyphs" stroke="#111" stroke-width="0.2">I</text>
<text x="777.5" y="218.7" font-size="12.5" fill="#111" font-weight="normal" font-style="normal" textLength="4.8" lengthAdjust="spacingAndGlyphs" stroke="#111" stroke-width="0.2">J</text>
<text x="839.8" y="218.7" font-size="12.5" fill="#111" font-weight="normal" font-style="normal" textLength="8.2" lengthAdjust="spacingAndGlyphs" stroke="#111" stroke-width="0.2">K</text>
<text x="904.6" y="218.7" font-size="12.5" fill="#111" font-weight="normal" font-style="normal" textLength="6.6" lengthAdjust="spacingAndGlyphs" stroke="#111" stroke-width="0.2">L</text>
<text x="965.9499999999999" y="218.7" font-size="12.5" fill="#111" font-weight="normal" font-style="normal" textLength="11.9" lengthAdjust="spacingAndGlyphs" stroke="#111" stroke-width="0.2">M</text>
<text x="10.0" y="239.8" font-size="12.5" fill="#111" font-weight="normal" font-style="normal" textLength="7.0" lengthAdjust="spacingAndGlyphs" stroke="#111" stroke-width="0.2">1</text>
<text x="10.0" y="259.8" font-size="12.5" fill="#00693c" font-weight="normal" font-style="normal" textLength="7.0" lengthAdjust="spacingAndGlyphs" stroke="#00693c" stroke-width="0.2">2</text>
<text x="10.0" y="279.8" font-size="12.5" fill="#111" font-weight="normal" font-style="normal" textLength="7.0" lengthAdjust="spacingAndGlyphs" stroke="#111" stroke-width="0.2">3</text>
<text x="10.0" y="299.8" font-size="12.5" fill="#111" font-weight="normal" font-style="normal" textLength="7.0" lengthAdjust="spacingAndGlyphs" stroke="#111" stroke-width="0.2">4</text>
<text x="10.0" y="319.8" font-size="12.5" fill="#111" font-weight="normal" font-style="normal" textLength="7.0" lengthAdjust="spacingAndGlyphs" stroke="#111" stroke-width="0.2">5</text>
<text x="10.0" y="339.8" font-size="12.5" fill="#111" font-weight="normal" font-style="normal" textLength="7.0" lengthAdjust="spacingAndGlyphs" stroke="#111" stroke-width="0.2">6</text>
<text x="10.0" y="359.8" font-size="12.5" fill="#111" font-weight="normal" font-style="normal" textLength="7.0" lengthAdjust="spacingAndGlyphs" stroke="#111" stroke-width="0.2">7</text>
<text x="10.0" y="379.8" font-size="12.5" fill="#111" font-weight="normal" font-style="normal" textLength="7.0" lengthAdjust="spacingAndGlyphs" stroke="#111" stroke-width="0.2">8</text>
<text x="10.0" y="399.8" font-size="12.5" fill="#111" font-weight="normal" font-style="normal" textLength="7.0" lengthAdjust="spacingAndGlyphs" stroke="#111" stroke-width="0.2">9</text>
<text x="7.3999999999999995" y="419.8" font-size="12.5" fill="#111" font-weight="normal" font-style="normal" textLength="13.6" lengthAdjust="spacingAndGlyphs" stroke="#111" stroke-width="0.2">10</text>
<text x="7.3999999999999995" y="439.8" font-size="12.5" fill="#111" font-weight="normal" font-style="normal" textLength="13.6" lengthAdjust="spacingAndGlyphs" stroke="#111" stroke-width="0.2">11</text>
<text x="7.3999999999999995" y="459.8" font-size="12.5" fill="#111" font-weight="normal" font-style="normal" textLength="13.6" lengthAdjust="spacingAndGlyphs" stroke="#111" stroke-width="0.2">12</text>
<text x="7.3999999999999995" y="479.8" font-size="12.5" fill="#111" font-weight="normal" font-style="normal" textLength="13.6" lengthAdjust="spacingAndGlyphs" stroke="#111" stroke-width="0.2">13</text>
<text x="7.3999999999999995" y="499.8" font-size="12.5" fill="#111" font-weight="normal" font-style="normal" textLength="13.6" lengthAdjust="spacingAndGlyphs" stroke="#111" stroke-width="0.2">14</text>
<text x="7.3999999999999995" y="519.8" font-size="12.5" fill="#111" font-weight="normal" font-style="normal" textLength="13.6" lengthAdjust="spacingAndGlyphs" stroke="#111" stroke-width="0.2">15</text>
<text x="7.3999999999999995" y="539.8" font-size="12.5" fill="#111" font-weight="normal" font-style="normal" textLength="13.6" lengthAdjust="spacingAndGlyphs" stroke="#111" stroke-width="0.2">16</text>
<text x="7.3999999999999995" y="559.8" font-size="12.5" fill="#111" font-weight="normal" font-style="normal" textLength="13.6" lengthAdjust="spacingAndGlyphs" stroke="#111" stroke-width="0.2">17</text>
<text x="7.3999999999999995" y="579.8" font-size="12.5" fill="#111" font-weight="normal" font-style="normal" textLength="13.6" lengthAdjust="spacingAndGlyphs" stroke="#111" stroke-width="0.2">18</text>
<text x="7.3999999999999995" y="599.8" font-size="12.5" fill="#111" font-weight="normal" font-style="normal" textLength="13.6" lengthAdjust="spacingAndGlyphs" stroke="#111" stroke-width="0.2">19</text>
<text x="7.3999999999999995" y="619.8" font-size="12.5" fill="#111" font-weight="normal" font-style="normal" textLength="13.6" lengthAdjust="spacingAndGlyphs" stroke="#111" stroke-width="0.2">20</text>
<text x="7.3999999999999995" y="639.8" font-size="12.5" fill="#111" font-weight="normal" font-style="normal" textLength="13.6" lengthAdjust="spacingAndGlyphs" stroke="#111" stroke-width="0.2">21</text>
<text x="7.3999999999999995" y="659.8" font-size="12.5" fill="#111" font-weight="normal" font-style="normal" textLength="13.6" lengthAdjust="spacingAndGlyphs" stroke="#111" stroke-width="0.2">22</text>
<rect x="27" y="224" width="125" height="19" fill="#6fd13f" />
<rect x="153" y="224" width="104" height="19" fill="#6fd13f" />
<rect x="322" y="224" width="105" height="20" fill="#6fd13f" />
<rect x="27" y="244" width="231" height="1" fill="#000"/>
<rect x="27" y="264" width="231" height="1" fill="#000"/>
<rect x="27" y="284" width="231" height="1" fill="#000"/>
<rect x="27" y="304" width="231" height="1" fill="#000"/>
<rect x="27" y="324" width="231" height="1" fill="#000"/>
<rect x="27" y="344" width="231" height="1" fill="#000"/>
<rect x="27" y="364" width="231" height="1" fill="#000"/>
<rect x="27" y="384" width="231" height="1" fill="#000"/>
<rect x="27" y="404" width="231" height="1" fill="#000"/>
<rect x="152" y="224" width="1" height="181" fill="#000"/>
<rect x="257" y="224" width="1" height="181" fill="#000"/>
<rect x="321" y="224" width="1" height="21" fill="#000"/>
<rect x="427" y="224" width="1" height="21" fill="#000"/>
<text x="39.2" y="239.8" font-size="13.5" fill="#000" font-weight="bold" font-style="normal" textLength="101.0" lengthAdjust="spacingAndGlyphs" >Уменьшаемое</text>
<text x="175" y="239.8" font-size="13.5" fill="#000" font-weight="bold" font-style="normal" textLength="62.3" lengthAdjust="spacingAndGlyphs" >Разность</text>
<text x="331.8" y="239.8" font-size="13.5" fill="#000" font-weight="bold" font-style="normal" textLength="86.2" lengthAdjust="spacingAndGlyphs" >Вычитаемое</text>
<text x="129.39999999999998" y="259.8" font-size="12.5" fill="#000" font-weight="normal" font-style="normal" textLength="21.3" lengthAdjust="spacingAndGlyphs" >447</text>
<text x="129.39999999999998" y="279.8" font-size="12.5" fill="#000" font-weight="normal" font-style="normal" textLength="21.3" lengthAdjust="spacingAndGlyphs" >267</text>
<text x="129.39999999999998" y="299.8" font-size="12.5" fill="#000" font-weight="normal" font-style="normal" textLength="21.3" lengthAdjust="spacingAndGlyphs" >579</text>
<text x="129.39999999999998" y="319.8" font-size="12.5" fill="#000" font-weight="normal" font-style="normal" textLength="21.3" lengthAdjust="spacingAndGlyphs" >741</text>
<text x="129.39999999999998" y="339.8" font-size="12.5" fill="#000" font-weight="normal" font-style="normal" textLength="21.3" lengthAdjust="spacingAndGlyphs" >584</text>
<text x="129.39999999999998" y="359.8" font-size="12.5" fill="#000" font-weight="normal" font-style="normal" textLength="21.3" lengthAdjust="spacingAndGlyphs" >634</text>
<text x="136.5" y="379.8" font-size="12.5" fill="#000" font-weight="normal" font-style="normal" textLength="14.2" lengthAdjust="spacingAndGlyphs" >91</text>
<text x="129.39999999999998" y="399.8" font-size="12.5" fill="#000" font-weight="normal" font-style="normal" textLength="21.3" lengthAdjust="spacingAndGlyphs" >745</text>
<rect x="27" y="243" width="126" height="23" fill="#fff" />
<rect x="29" y="246" width="122" height="17" fill="#e6f0fa" />
<text x="129.4" y="259.8" font-size="12.5" fill="#000" font-weight="normal" font-style="normal" textLength="21.3" lengthAdjust="spacingAndGlyphs" >447</text>
<rect x="30" y="243" width="123" height="2" fill="#0f62c0"/>
<rect x="30" y="264" width="123" height="2" fill="#0f62c0"/>
<rect x="27" y="242" width="2" height="5" fill="#0f62c0" />
<rect x="27" y="262" width="2" height="5" fill="#0f62c0" />
<rect x="25" y="244" width="2" height="21" fill="#00693c"/>
<rect x="320" y="243" width="109" height="23" fill="#d9532b" />
<rect x="321" y="244" width="107" height="21" fill="#fff" />
<rect x="325" y="244" width="2" height="2" fill="#00693c" />
<rect x="329" y="244" width="7" height="2" fill="#00693c" />
<rect x="338" y="244" width="7" height="2" fill="#00693c" />
<rect x="347" y="244" width="7" height="2" fill="#00693c" />
<rect x="356" y="244" width="7" height="2" fill="#00693c" />
<rect x="365" y="244" width="7" height="2" fill="#00693c" />
<rect x="374" y="244" width="7" height="2" fill="#00693c" />
<rect x="383" y="244" width="7" height="2" fill="#00693c" />
<rect x="392" y="244" width="7" height="2" fill="#00693c" />
<rect x="401" y="244" width="7" height="2" fill="#00693c" />
<rect x="410" y="244" width="7" height="2" fill="#00693c" />
<rect x="419" y="244" width="7" height="2" fill="#00693c" />
<rect x="325" y="263" width="6" height="2" fill="#00693c" />
<rect x="333" y="263" width="7" height="2" fill="#00693c" />
<rect x="342" y="263" width="7" height="2" fill="#00693c" />
<rect x="351" y="263" width="7" height="2" fill="#00693c" />
<rect x="360" y="263" width="7" height="2" fill="#00693c" />
<rect x="369" y="263" width="7" height="2" fill="#00693c" />
<rect x="378" y="263" width="7" height="2" fill="#00693c" />
<rect x="387" y="263" width="7" height="2" fill="#00693c" />
<rect x="396" y="263" width="7" height="2" fill="#00693c" />
<rect x="405" y="263" width="7" height="2" fill="#00693c" />
<rect x="414" y="263" width="7" height="2" fill="#00693c" />
<rect x="423" y="263" width="3" height="2" fill="#00693c" />
<rect x="321" y="248" width="2" height="6" fill="#00693c" />
<rect x="321" y="256" width="2" height="5" fill="#00693c" />
<rect x="426" y="248" width="2" height="2" fill="#00693c" />
<rect x="426" y="252" width="2" height="7" fill="#00693c" />
<rect x="323" y="246" width="103" height="17" fill="#ffebeb" />
<text x="404.7" y="259.8" font-size="12.5" fill="#000" font-weight="normal" font-style="normal" textLength="19.6" lengthAdjust="spacingAndGlyphs" >143</text>
<rect x="318" y="241" width="7" height="7" fill="#fff" />
<rect x="319" y="242" width="5" height="5" fill="#d9532b" />
<rect x="318" y="261" width="7" height="7" fill="#fff" />
<rect x="319" y="262" width="5" height="5" fill="#d9532b" />
<rect x="424" y="241" width="7" height="7" fill="#fff" />
<rect x="425" y="242" width="5" height="5" fill="#d9532b" />
<rect x="424" y="261" width="7" height="7" fill="#fff" />
<rect x="425" y="262" width="5" height="5" fill="#d9532b" />
<rect x="151" y="243" width="108" height="23" fill="#fff" />
<rect x="156" y="243" width="103" height="2" fill="#12693d"/>
<rect x="151" y="248" width="2" height="13" fill="#12693d"/>
<rect x="156" y="264" width="98" height="2" fill="#12693d"/>
<rect x="257" y="243" width="2" height="19" fill="#12693d"/>
<rect x="255" y="262" width="4.5" height="4.5" fill="#12693d" />
<rect x="151" y="243" width="4" height="3.5" fill="#0f62c0" />
<rect x="151" y="262" width="4" height="3.5" fill="#0f62c0" />
<text x="155.4" y="259.9" font-size="12.5" textLength="43.2" lengthAdjust="spacingAndGlyphs" stroke-width="0.15"><tspan fill="#000" stroke="#000">=</tspan><tspan fill="#1468c4" stroke="#1468c4">A2</tspan><tspan fill="#000" stroke="#000">-</tspan><tspan fill="#d4501f" stroke="#d4501f">D2</tspan></text>
<rect x="199" y="246" width="1" height="18" fill="#000"/>
<rect x="148.75" y="240.6" width="113.8" height="27.55" rx="7" fill="none" stroke="#ff0000" stroke-width="3.2" class="aa"/>
<rect x="1009.5" y="206.5" width="14" height="14" fill="#fff" stroke="#ababab" stroke-width="1" />
<path d="M1012.5 215.5h8l-4-4.5z" fill="#777" stroke="none" stroke-width="1" class="aa" />
<rect x="1009.5" y="221.5" width="14" height="410" fill="#fff" stroke="#ababab" stroke-width="1" />
<rect x="1009" y="632" width="15" height="20" fill="url(#dz)" />
<rect x="1009.5" y="652.5" width="14" height="14" fill="#fff" stroke="#ababab" stroke-width="1" />
<path d="M1012.5 657.5h8l-4 4.5z" fill="#777" stroke="none" stroke-width="1" class="aa" />
<rect x="1" y="665" width="1005" height="1" fill="#e9e9e9"/>
<rect x="1" y="666" width="1005" height="1" fill="#a3a3a3"/>
<rect x="1" y="667" width="1026" height="27" fill="#e6e6e6" />
<rect x="102" y="665" width="105" height="24" fill="#fff" />
<rect x="102" y="689" width="106" height="2" fill="#00693c"/>
<rect x="101" y="666" width="1" height="25" fill="#b5b5b5"/>
<rect x="207" y="666" width="1" height="25" fill="#b5b5b5"/>
<text x="113" y="684.2" font-size="13.5" fill="#00693c" font-weight="bold" font-style="normal" textLength="83.2" lengthAdjust="spacingAndGlyphs" >microexcel.ru</text>
<path d="M32 675.6v7.6l-4.3-3.8z" fill="#bfbfbf" stroke="none" stroke-width="1" class="aa" />
<path d="M57 675.6v7.6l4.3-3.8z" fill="#bfbfbf" stroke="none" stroke-width="1" class="aa" />
<path d="M248.7 672a7.5 7.5 0 1 1 -0.1 0z" fill="none" stroke="#6a6a6a" stroke-width="1.1" class="aa" />
<path d="M244.2 679.5h9M248.7 675v9" fill="none" stroke="#6a6a6a" stroke-width="1.6" class="aa" />
<rect x="616" y="675" width="2" height="2" fill="#a9a9a9" />
<rect x="616" y="679" width="2" height="2" fill="#a9a9a9" />
<rect x="616" y="683" width="2" height="2" fill="#a9a9a9" />
<rect x="633.5" y="673.5" width="14" height="14" fill="#fff" stroke="#ababab" stroke-width="1" />
<path d="M642.3 676.6v7.6l-4.4-3.8z" fill="#5e5e5e" stroke="none" stroke-width="1" class="aa" />
<rect x="647.5" y="673.5" width="316" height="14" fill="#fff" stroke="#ababab" stroke-width="1" />
<rect x="964" y="673" width="27" height="15" fill="url(#dz)" />
<rect x="991.5" y="673.5" width="14" height="14" fill="#fff" stroke="#ababab" stroke-width="1" />
<path d="M996.6 676.6v7.6l4.4-3.8z" fill="#5e5e5e" stroke="none" stroke-width="1" class="aa" />
<rect x="1" y="694" width="1026" height="1" fill="#c8c8c8"/>
<rect x="1" y="695" width="1026" height="21" fill="#f3f3f3" />
<text x="9" y="707.7" font-size="11.5" fill="#333" font-weight="normal" font-style="normal" textLength="44.3" lengthAdjust="spacingAndGlyphs" >Укажите</text>
<rect x="74" y="699" width="12" height="12" fill="#fff" />
<path d="M74.5 705v5.4h11v-11.2" fill="none" stroke="#262033" stroke-width="1.2" class="aa" />
<rect x="80" y="699" width="6" height="2.4" fill="#262033" />
<rect x="79.2" y="704" width="1.9" height="1" fill="#262033" />
<rect x="82.2" y="704" width="1.9" height="1" fill="#262033" />
<rect x="76.2" y="706.1" width="1.9" height="1" fill="#262033" />
<rect x="79.2" y="706.1" width="1.9" height="1" fill="#262033" />
<rect x="82.2" y="706.1" width="1.9" height="1" fill="#262033" />
<rect x="76.2" y="708.2" width="1.9" height="1" fill="#262033" />
<rect x="79.2" y="708.2" width="1.9" height="1" fill="#262033" />
<rect x="82.2" y="708.2" width="1.9" height="1" fill="#262033" />
<path d="M76.1 698a3 3 0 1 1 -0.1 0z" fill="#2a2a33" stroke="#f3f3f3" stroke-width="0.8" class="aa" />
<path d="M739.5 698.5h12v12h-12zM743.5 698.5v12M747.5 698.5v12M739.5 702.5h12M739.5 706.5h12" fill="none" stroke="#6e6e6e" stroke-width="1.1" class="aa" />
<path d="M777.5 698.5h13v12h-13z" fill="none" stroke="#6e6e6e" stroke-width="1.1" class="aa" />
<path d="M780.6 700.8h6.8v7.6h-6.8zM782.4 702.8h3.4M782.4 704.6h3.4M782.4 706.4h3.4" fill="none" stroke="#6e6e6e" stroke-width="1" class="aa" />
<path d="M815.5 698.5h13v12h-13zM815.5 705h8.3v-6.5M820 698.5v6.5" fill="none" stroke="#6e6e6e" stroke-width="1.1" class="aa" />
<rect x="846" y="705" width="6" height="2" fill="#666"/>
<rect x="856" y="705" width="100" height="1" fill="#b0b0b0"/>
<rect x="906" y="703" width="1" height="5" fill="#b0b0b0"/>
<rect x="960" y="705" width="7" height="2" fill="#666"/>
<rect x="962.5" y="701.5" width="2" height="8.0" fill="#666"/>
<text x="978.8" y="708.2" font-size="11.5" fill="#a6a6a6" font-weight="normal" font-style="normal" textLength="29.4" lengthAdjust="spacingAndGlyphs" >100 %</text>
<rect x="0" y="65" width="1" height="652" fill="#00753f"/>
<rect x="1026.4" y="65" width="1.6" height="652" fill="#00753f" class="aa"/>
<rect x="0" y="715.7" width="1028" height="1.3" fill="#00753f" class="aa"/>
</svg>
</body></html>
